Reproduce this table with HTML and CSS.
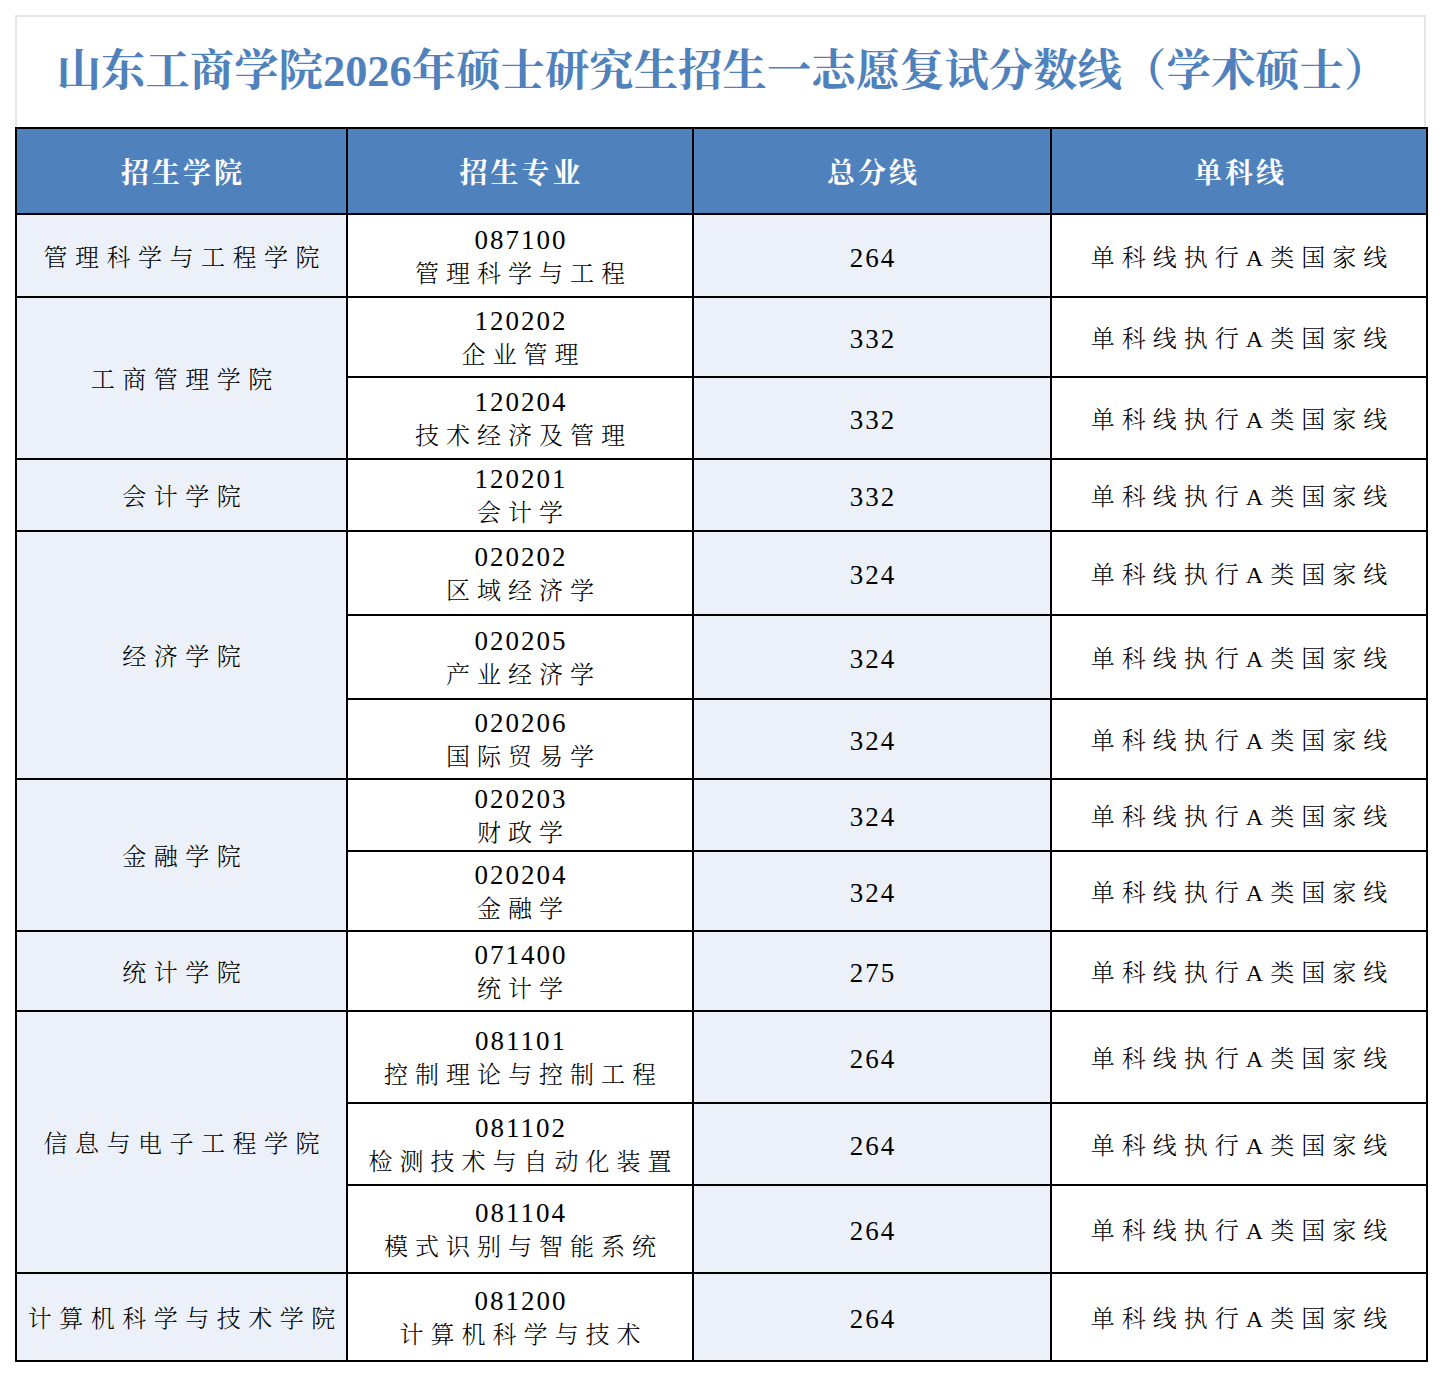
FILE: index.html
```html
<!DOCTYPE html>
<html lang="zh-CN">
<head>
<meta charset="utf-8">
<title>山东工商学院2026年硕士研究生招生一志愿复试分数线（学术硕士）</title>
<link rel="stylesheet" href="styles.css">
</head>
<body>
<div class="sheet">
  <div class="title-box">
    <h1 class="title">山东工商学院2026年硕士研究生招生一志愿复试分数线（学术硕士）</h1>
  </div>
  <table class="grid">
    <colgroup>
      <col class="c1"><col class="c2"><col class="c3"><col class="c4">
    </colgroup>
    <thead>
      <tr class="h86">
        <th>招生学院</th><th>招生专业</th><th>总分线</th><th>单科线</th>
      </tr>
    </thead>
    <tbody>
      <tr class="h83">
        <td class="college">管理科学与工程学院</td>
        <td class="major"><span class="code">087100</span><span class="name">管理科学与工程</span></td>
        <td class="total">264</td>
        <td class="single">单科线执行A类国家线</td>
      </tr>
      <tr class="h80">
        <td class="college" rowspan="2">工商管理学院</td>
        <td class="major"><span class="code">120202</span><span class="name">企业管理</span></td>
        <td class="total">332</td>
        <td class="single">单科线执行A类国家线</td>
      </tr>
      <tr class="h82">
        <td class="major"><span class="code">120204</span><span class="name">技术经济及管理</span></td>
        <td class="total">332</td>
        <td class="single">单科线执行A类国家线</td>
      </tr>
      <tr class="h72">
        <td class="college">会计学院</td>
        <td class="major"><span class="code">120201</span><span class="name">会计学</span></td>
        <td class="total">332</td>
        <td class="single">单科线执行A类国家线</td>
      </tr>
      <tr class="h84">
        <td class="college" rowspan="3">经济学院</td>
        <td class="major"><span class="code">020202</span><span class="name">区域经济学</span></td>
        <td class="total">324</td>
        <td class="single">单科线执行A类国家线</td>
      </tr>
      <tr class="h84">
        <td class="major"><span class="code">020205</span><span class="name">产业经济学</span></td>
        <td class="total">324</td>
        <td class="single">单科线执行A类国家线</td>
      </tr>
      <tr class="h80">
        <td class="major"><span class="code">020206</span><span class="name">国际贸易学</span></td>
        <td class="total">324</td>
        <td class="single">单科线执行A类国家线</td>
      </tr>
      <tr class="h72">
        <td class="college" rowspan="2">金融学院</td>
        <td class="major"><span class="code">020203</span><span class="name">财政学</span></td>
        <td class="total">324</td>
        <td class="single">单科线执行A类国家线</td>
      </tr>
      <tr class="h80">
        <td class="major"><span class="code">020204</span><span class="name">金融学</span></td>
        <td class="total">324</td>
        <td class="single">单科线执行A类国家线</td>
      </tr>
      <tr class="h80">
        <td class="college">统计学院</td>
        <td class="major"><span class="code">071400</span><span class="name">统计学</span></td>
        <td class="total">275</td>
        <td class="single">单科线执行A类国家线</td>
      </tr>
      <tr class="h92">
        <td class="college" rowspan="3">信息与电子工程学院</td>
        <td class="major"><span class="code">081101</span><span class="name">控制理论与控制工程</span></td>
        <td class="total">264</td>
        <td class="single">单科线执行A类国家线</td>
      </tr>
      <tr class="h82">
        <td class="major"><span class="code">081102</span><span class="name">检测技术与自动化装置</span></td>
        <td class="total">264</td>
        <td class="single">单科线执行A类国家线</td>
      </tr>
      <tr class="h88">
        <td class="major"><span class="code">081104</span><span class="name">模式识别与智能系统</span></td>
        <td class="total">264</td>
        <td class="single">单科线执行A类国家线</td>
      </tr>
      <tr class="h88">
        <td class="college">计算机科学与技术学院</td>
        <td class="major"><span class="code">081200</span><span class="name">计算机科学与技术</span></td>
        <td class="total">264</td>
        <td class="single">单科线执行A类国家线</td>
      </tr>
    </tbody>
  </table>
</div>
</body>
</html>
```

FILE: styles.css
```css
html, body {
  margin: 0;
  padding: 0;
  background: #ffffff;
}

body {
  font-family: "Liberation Serif", "Noto Serif CJK SC", "Noto Sans CJK SC", serif;
  color: #000000;
}

.sheet {
  width: 1411px;
  margin: 15px 0 0 15px;
}

.title-box {
  box-sizing: border-box;
  height: 112px;
  border: 2px solid #e6e6e6;
  border-bottom: none;
  display: flex;
  align-items: center;
  justify-content: center;
  padding-bottom: 10px;
}

.title {
  margin: 0;
  font-size: 44.4px;
  font-weight: 700;
  color: #4f81bd;
  font-family: "Liberation Serif", "Noto Serif CJK SC", "Noto Sans CJK SC", serif;
  white-space: nowrap;
  padding-left: 4px;
}

.grid {
  width: 1411px;
  border-collapse: collapse;
  table-layout: fixed;
}

.c1 { width: 331px; }
.c2 { width: 346px; }
.c3 { width: 358px; }
.c4 { width: 376px; }

.grid th,
.grid td {
  border: 2px solid #000000;
  padding: 0;
  text-align: center;
  vertical-align: middle;
}

.grid th {
  background: #4f81bd;
  color: #ffffff;
  font-size: 28px;
  font-weight: 700;
  letter-spacing: 3px;
  padding-left: 3px;
}

.grid td {
  font-size: 24px;
  font-weight: 300;
  letter-spacing: 7px;
  padding: 4px 0 0 7px;
  line-height: 34px;
}

.grid td.college {
  background: #ecf1f9;
  letter-spacing: 7.5px;
  padding-left: 7.5px;
}

.grid td.total {
  background: #ecf1f9;
  font-size: 27px;
  letter-spacing: 2px;
  padding-left: 2px;
}

.grid td.major,
.grid td.single {
  background: #ffffff;
}

.grid td.major {
  padding-top: 2px;
  line-height: 34px;
}

.code {
  display: block;
  font-size: 27px;
  letter-spacing: 2px;
  margin-left: -5px;
}

.name {
  display: block;
}

.h72 { height: 72px; }
.h80 { height: 80px; }
.h82 { height: 82px; }
.h83 { height: 83px; }
.h84 { height: 84px; }
.h86 { height: 86px; }
.h88 { height: 88px; }
.h92 { height: 92px; }
```
